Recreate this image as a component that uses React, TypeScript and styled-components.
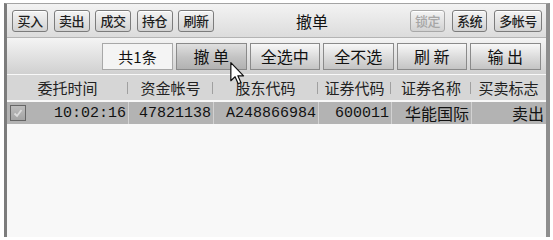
import React from 'react';
import styled, { createGlobalStyle } from 'styled-components';

const Global = createGlobalStyle`
  html, body { margin: 0; padding: 0; background: #ffffff; }
  body { font-family: "Noto Sans CJK SC", "Noto Sans", sans-serif; }
  #root { width: 553px; height: 240px; overflow: hidden; }
`;

const Page = styled.div`
  width: 553px;
  height: 240px;
  box-sizing: border-box;
  padding: 3px 0 0 4px;
  background: #ffffff;
`;

const Window = styled.div`
  position: relative;
  width: 546px;
  height: 234px;
  box-sizing: border-box;
  border-left: 3px solid #7c7c7c;
  border-right: 4px solid #8e8e8e;
  border-top: 1px solid #a4a4a4;
  display: flex;
  flex-direction: column;
  background: #f8f8f8;
  overflow: hidden;
`;

const TitleBar = styled.div`
  height: 33px;
  flex: none;
  display: flex;
  align-items: center;
  padding: 0 4px 0 5px;
  background: linear-gradient(to bottom, #f3f3f3, #dcdcdc);
  border-bottom: 1px solid #b4b4b4;
`;

const SmallGroup = styled.div<{ $gap: number }>`
  display: flex;
  align-items: center;
  gap: ${p => p.$gap}px;
`;

const SmallButton = styled.div<{ $w?: number; $disabled?: boolean }>`
  width: ${p => p.$w ?? 36}px;
  height: 22px;
  box-sizing: border-box;
  display: flex;
  align-items: center;
  justify-content: center;
  border: 1px solid ${p => (p.$disabled ? '#a8a8a8' : '#7c7c7c')};
  border-radius: 3px;
  background: linear-gradient(to bottom, #f4f4f4, #d2d2d2);
  box-shadow: inset 0 1px 0 #ffffff;
  font-size: 13px;
  font-weight: 500;
  line-height: 1;
  letter-spacing: -0.5px;
  color: ${p => (p.$disabled ? '#a6a6a6' : '#1e1e1e')};
`;

const Title = styled.div`
  flex: 1;
  text-align: center;
  font-size: 16px;
  color: #111111;
  line-height: 1;
`;

const ToolBar = styled.div`
  height: 36px;
  flex: none;
  display: flex;
  align-items: center;
  justify-content: flex-end;
  gap: 3px;
  padding-right: 5.5px;
  background: linear-gradient(to bottom, #f4f4f4, #d0d0d0);
`;

const CountBox = styled.div`
  width: 71px;
  height: 27px;
  box-sizing: border-box;
  display: flex;
  align-items: center;
  justify-content: center;
  border: 1px solid #a8a8a8;
  background: #f4f4f4;
  font-size: 15px;
  color: #111111;
`;

const ToolButton = styled.div<{ $hover?: boolean }>`
  width: 70.5px;
  height: 27px;
  box-sizing: border-box;
  display: flex;
  align-items: center;
  justify-content: center;
  border: 1px solid #8a8a8a;
  background: ${p =>
    p.$hover
      ? 'linear-gradient(to bottom, #e0e0e0, #c2c2c2 55%, #b2b2b2)'
      : 'linear-gradient(to bottom, #f8f8f8, #dadada 55%, #c4c4c4)'};
  font-size: 16px;
  color: #111111;
  white-space: pre;
  line-height: 1;
`;

const HeaderRow = styled.div`
  margin-top: 1px;
  height: 25px;
  flex: none;
  display: flex;
  background: #d6d6d6;
`;

const HeaderCell = styled.div<{ $w: number }>`
  position: relative;
  width: ${p => p.$w}px;
  flex: none;
  display: flex;
  align-items: center;
  justify-content: center;
  font-size: 15px;
  color: #222222;
  &:not(:last-child)::after {
    content: '';
    position: absolute;
    right: 0;
    top: 7px;
    width: 1px;
    height: 12px;
    background: #a0a0a0;
  }
`;

const DataRow = styled.div`
  margin-top: 2px;
  height: 22px;
  flex: none;
  display: flex;
  background: #b3b3b3;
`;

const DataCell = styled.div<{ $w: number; $mono?: boolean }>`
  width: ${p => p.$w}px;
  flex: none;
  box-sizing: border-box;
  display: flex;
  align-items: center;
  justify-content: flex-end;
  padding-right: 2px;
  border-left: 1px solid #d2d2d2;
  font-family: ${p =>
    p.$mono ? '"Liberation Mono", "DejaVu Sans Mono", monospace' : '"Noto Sans CJK SC", sans-serif'};
  font-size: ${p => (p.$mono ? 15 : 16)}px;
  color: #111111;
  &:first-child {
    border-left: none;
    justify-content: space-between;
    padding-left: 3px;
  }
`;

const CheckBox = styled.div`
  width: 16px;
  height: 16px;
  box-sizing: border-box;
  border: 1px solid #666666;
  background: linear-gradient(to bottom, #bcbcbc, #a4a4a4);
  display: flex;
  align-items: center;
  justify-content: center;
`;

const Cursor = styled.svg`
  position: absolute;
  left: 223px;
  top: 58px;
  width: 15px;
  height: 23px;
  overflow: visible;
`;

const widths = [121, 85, 105, 73, 80, 75];
const headers = ['委托时间', '资金帐号', '股东代码', '证券代码', '证券名称', '买卖标志'];

export default function App() {
  return (
    <>
      <Global />
      <Page>
        <Window>
          <TitleBar>
            <SmallGroup $gap={5.5}>
              <SmallButton>买入</SmallButton>
              <SmallButton>卖出</SmallButton>
              <SmallButton>成交</SmallButton>
              <SmallButton>持仓</SmallButton>
              <SmallButton>刷新</SmallButton>
            </SmallGroup>
            <Title>撤单</Title>
            <SmallGroup $gap={7}>
              <SmallButton $w={35} $disabled>锁定</SmallButton>
              <SmallButton $w={35}>系统</SmallButton>
              <SmallButton $w={48}>多帐号</SmallButton>
            </SmallGroup>
          </TitleBar>
          <ToolBar>
            <CountBox>共1条</CountBox>
            <ToolButton $hover>{'撤 单'}</ToolButton>
            <ToolButton>全选中</ToolButton>
            <ToolButton>全不选</ToolButton>
            <ToolButton>{'刷 新'}</ToolButton>
            <ToolButton>{'输 出'}</ToolButton>
          </ToolBar>
          <HeaderRow>
            {headers.map((h, i) => (
              <HeaderCell key={h} $w={widths[i]}>
                {h}
              </HeaderCell>
            ))}
          </HeaderRow>
          <DataRow>
            <DataCell $w={widths[0]} $mono>
              <CheckBox>
                <svg width="12" height="12" viewBox="0 0 12 12">
                  <polyline
                    points="2.5,6.5 5,9 9.5,3"
                    fill="none"
                    stroke="#dcdcdc"
                    strokeWidth="1.8"
                  />
                </svg>
              </CheckBox>
              10:02:16
            </DataCell>
            <DataCell $w={widths[1]} $mono>47821138</DataCell>
            <DataCell $w={widths[2]} $mono>A248866984</DataCell>
            <DataCell $w={widths[3]} $mono>600011</DataCell>
            <DataCell $w={widths[4]}>华能国际</DataCell>
            <DataCell $w={widths[5]}>卖出</DataCell>
          </DataRow>
          <Cursor viewBox="0 0 12 19">
            <path
              d="M0.5 0.5 L0.5 15.5 L4 12.2 L6.6 18 L8.8 17 L6.3 11.4 L11 11.4 Z"
              fill="#ffffff"
              stroke="#111111"
              strokeWidth="1"
              strokeLinejoin="round"
            />
          </Cursor>
        </Window>
      </Page>
    </>
  );
}
